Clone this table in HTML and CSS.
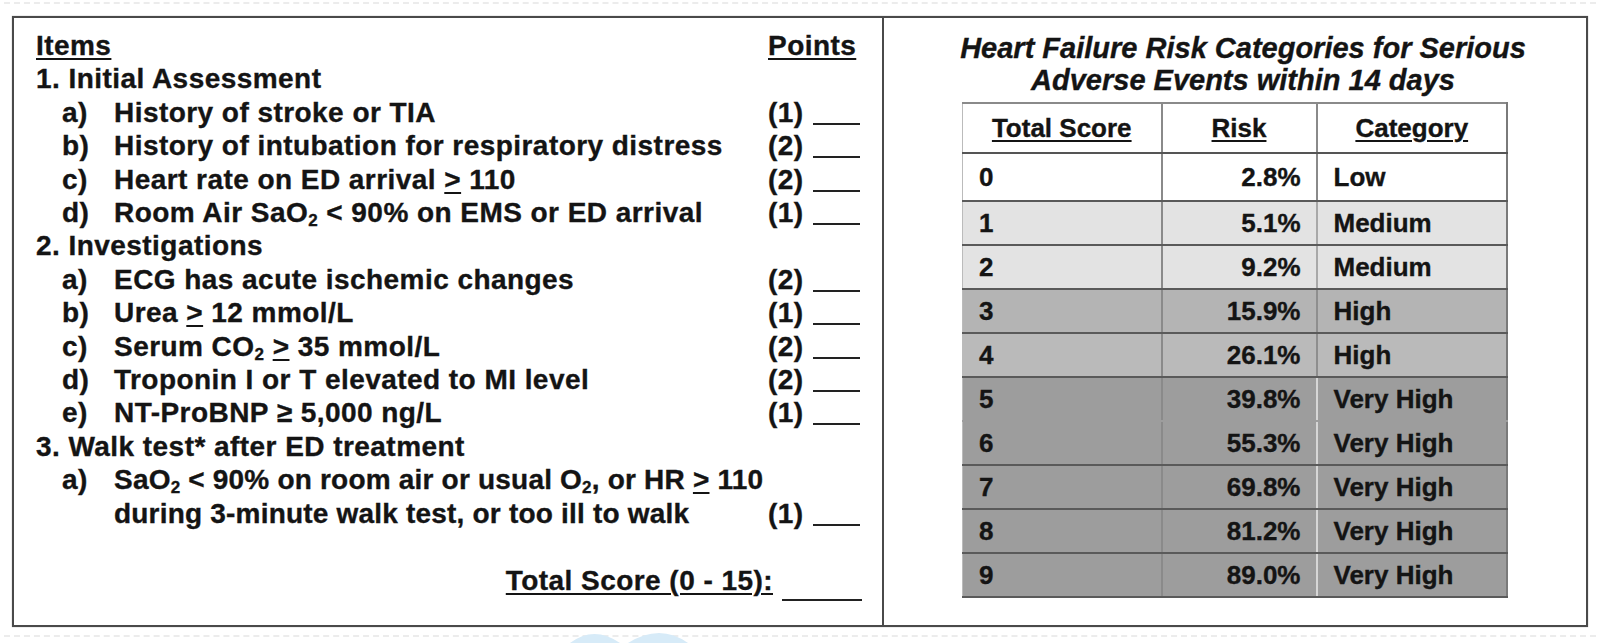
FILE: index.html
```html
<!DOCTYPE html>
<html>
<head>
<meta charset="utf-8">
<link rel="stylesheet" href="styles.css">
</head>
<body>
<div class="page">
  <div class="dashes"></div>
  <div class="card">
    <section class="left">
      <div class="row head"><span class="txt"><span class="u">Items</span></span><span class="pts"><span class="u">Points</span></span></div>
      <div class="row sec">1. Initial Assessment</div>
      <div class="row item"><span class="lbl">a)</span><span class="txt">History of stroke or TIA</span><span class="pts">(1)<span class="blank"></span></span></div>
      <div class="row item"><span class="lbl">b)</span><span class="txt">History of intubation for respiratory distress</span><span class="pts">(2)<span class="blank"></span></span></div>
      <div class="row item"><span class="lbl">c)</span><span class="txt">Heart rate on ED arrival <span class="ge">&gt;</span> 110</span><span class="pts">(2)<span class="blank"></span></span></div>
      <div class="row item"><span class="lbl">d)</span><span class="txt">Room Air SaO<sub>2</sub> &lt; 90% on EMS or ED arrival</span><span class="pts">(1)<span class="blank"></span></span></div>
      <div class="row sec">2. Investigations</div>
      <div class="row item"><span class="lbl">a)</span><span class="txt">ECG has acute ischemic changes</span><span class="pts">(2)<span class="blank"></span></span></div>
      <div class="row item"><span class="lbl">b)</span><span class="txt">Urea <span class="ge">&gt;</span> 12 mmol/L</span><span class="pts">(1)<span class="blank"></span></span></div>
      <div class="row item"><span class="lbl">c)</span><span class="txt">Serum CO<sub>2</sub> <span class="ge">&gt;</span> 35 mmol/L</span><span class="pts">(2)<span class="blank"></span></span></div>
      <div class="row item"><span class="lbl">d)</span><span class="txt">Troponin I or T elevated to MI level</span><span class="pts">(2)<span class="blank"></span></span></div>
      <div class="row item"><span class="lbl">e)</span><span class="txt">NT-ProBNP ≥ 5,000 ng/L</span><span class="pts">(1)<span class="blank"></span></span></div>
      <div class="row sec">3. Walk test* after ED treatment</div>
      <div class="row item multi"><span class="lbl">a)</span><span class="txt">SaO<sub>2</sub> &lt; 90% on room air or usual O<sub>2</sub>, or HR <span class="ge">&gt;</span> 110<br>during 3-minute walk test, or too ill to walk</span><span class="pts">(1)<span class="blank"></span></span></div>
      <div class="row total"><span class="u">Total Score (0 - 15):</span><span class="blank wide"></span></div>
    </section>
    <section class="right">
      <h2 class="title">Heart Failure Risk Categories for Serious<br>Adverse Events within 14 days</h2>
      <table class="risk">
        <thead>
          <tr><th class="c1"><span class="u">Total Score</span></th><th class="c2"><span class="u">Risk</span></th><th class="c3"><span class="u">Category</span></th></tr>
        </thead>
        <tbody>
          <tr class="low r0"><td class="c1">0</td><td class="c2">2.8%</td><td class="c3">Low</td></tr>
          <tr class="med"><td class="c1">1</td><td class="c2">5.1%</td><td class="c3">Medium</td></tr>
          <tr class="med"><td class="c1">2</td><td class="c2">9.2%</td><td class="c3">Medium</td></tr>
          <tr class="high h3"><td class="c1">3</td><td class="c2">15.9%</td><td class="c3">High</td></tr>
          <tr class="high"><td class="c1">4</td><td class="c2">26.1%</td><td class="c3">High</td></tr>
          <tr class="vhigh nobot"><td class="c1">5</td><td class="c2">39.8%</td><td class="c3">Very High</td></tr>
          <tr class="vhigh"><td class="c1">6</td><td class="c2">55.3%</td><td class="c3">Very High</td></tr>
          <tr class="vhigh"><td class="c1">7</td><td class="c2">69.8%</td><td class="c3">Very High</td></tr>
          <tr class="vhigh"><td class="c1">8</td><td class="c2">81.2%</td><td class="c3">Very High</td></tr>
          <tr class="vhigh"><td class="c1">9</td><td class="c2">89.0%</td><td class="c3">Very High</td></tr>
        </tbody>
      </table>
    </section>
  </div>
  <div class="dashes bottom"></div>
  <svg class="mark" width="130" height="16" viewBox="0 0 130 16"><path d="M4 16 Q28 -2 54 16 Z" fill="#d7ebf8"/><path d="M62 16 Q94 -4 122 16 Z" fill="#d7ebf8"/></svg>
</div>
</body>
</html>
```
FILE: styles.css
```css
html, body {
  margin: 0;
  padding: 0;
  background: #fff;
}
body {
  width: 1600px;
  height: 643px;
  overflow: hidden;
  font-family: "Liberation Sans", Arial, sans-serif;
  font-weight: bold;
  color: #141414;
  -webkit-text-stroke: 0.35px #141414;
}
.page {
  position: relative;
  width: 1600px;
  height: 643px;
  padding-top: 2px;
  box-sizing: border-box;
}
.dashes {
  height: 0;
  margin: 0 4px;
  border-top: 2px dashed #ececec;
}
.dashes.bottom {
  margin-top: 8px;
}
.card {
  display: flex;
  margin: 12px 12px 0 12px;
  height: 611px;
  border: 2px solid #4a4a4a;
  box-shadow: 0 0 1px #999;
  box-sizing: border-box;
}
.left {
  width: 870px;
  flex-shrink: 0;
  border-right: 2px solid #4a4a4a;
  padding: 11px 24px 0 22px;
  box-sizing: border-box;
  font-size: 28px;
  line-height: 33.4px;
  letter-spacing: 0.45px;
}
.row {
  display: flex;
  align-items: flex-end;
  white-space: nowrap;
}
.row .txt {
  flex: 1 1 auto;
  min-width: 0;
}
.row .lbl {
  flex: 0 0 52px;
  width: 52px;
  margin-left: 26px;
}
.row.multi .lbl {
  align-self: flex-start;
}
.row.multi .txt {
  letter-spacing: 0.2px;
}
.pts {
  flex: 0 0 90px;
  width: 90px;
  display: flex;
  align-items: baseline;
}
.blank {
  display: inline-block;
  flex-shrink: 0;
  width: 47px;
  height: 0;
  margin-left: 9px;
  border-bottom: 2px solid #222;
  position: relative;
  top: 3px;
}
.blank.wide {
  width: 80px;
}
.u {
  text-decoration: underline;
  text-decoration-thickness: 2px;
  text-underline-offset: 3px;
}
.ge {
  text-decoration: underline;
  text-decoration-thickness: 2px;
  text-underline-offset: 3px;
}
sub {
  font-size: 17px;
  line-height: 0;
  vertical-align: -4px;
}
.total {
  margin-top: 34px;
  justify-content: flex-end;
  margin-right: -4px;
}
.right {
  flex: 1;
  padding-top: 14px;
  display: flex;
  flex-direction: column;
  align-items: center;
}
.title {
  margin: 0;
  font-size: 29px;
  line-height: 32px;
  font-style: italic;
  font-weight: bold;
  text-align: center;
  letter-spacing: 0;
  padding-left: 16px;
}
.risk {
  margin-top: 6px;
  width: 546px;
  border-collapse: collapse;
  font-size: 26px;
  border-top: 2px solid #8a8a8a;
  border-right: 2px solid #7a7a7a;
  border-left: 1px solid #bbb;
  border-bottom: 2px solid #7a7a7a;
}
.risk th, .risk td {
  padding: 0;
  vertical-align: middle;
  white-space: nowrap;
}
.risk th {
  height: 48px;
  font-weight: bold;
  text-align: center;
  border-bottom: 2px solid #555;
}
.risk td {
  height: 42px;
  border-bottom: 2px solid #5a5a5a;
}
.risk .c1 {
  width: 199px;
  text-align: left;
  padding-left: 16px;
  box-sizing: border-box;
}
.risk th.c1 {
  text-align: center;
  padding-left: 0;
}
.risk .c2 {
  width: 138px;
  text-align: right;
  padding-right: 15px;
  border-left: 2px solid #8a8a8a;
}
.risk th.c2 {
  text-align: center;
  padding-right: 0;
}
.risk .c3 {
  text-align: left;
  padding-left: 16px;
  border-left: 2px solid #8a8a8a;
}
.risk th.c3 {
  text-align: center;
  padding-left: 0;
}
.risk tr.r0 td {
  height: 46px;
}
.risk tr.low td {
  background: #fff;
}
.risk tr.med td {
  background: #e3e3e3;
}
.risk tr.med td.c3 {
  border-left-color: #a8a8a8;
}
.risk tr.high td {
  background: #bababa;
}
.risk tr.h3 td {
  background: #b4b4b4;
}
.risk tr.high td.c3 {
  border-left-color: #8e8e8e;
}
.risk tr.vhigh td {
  background: #9d9d9d;
}
.risk tr.vhigh td.c2 {
  border-left-color: #8a8a8a;
}
.risk tr.vhigh td.c3 {
  border-left-color: #d6d6d6;
}
.risk tr.nobot td {
  border-bottom-color: #9d9d9d;
}
.mark {
  position: absolute;
  left: 566px;
  top: 627px;
}
```
